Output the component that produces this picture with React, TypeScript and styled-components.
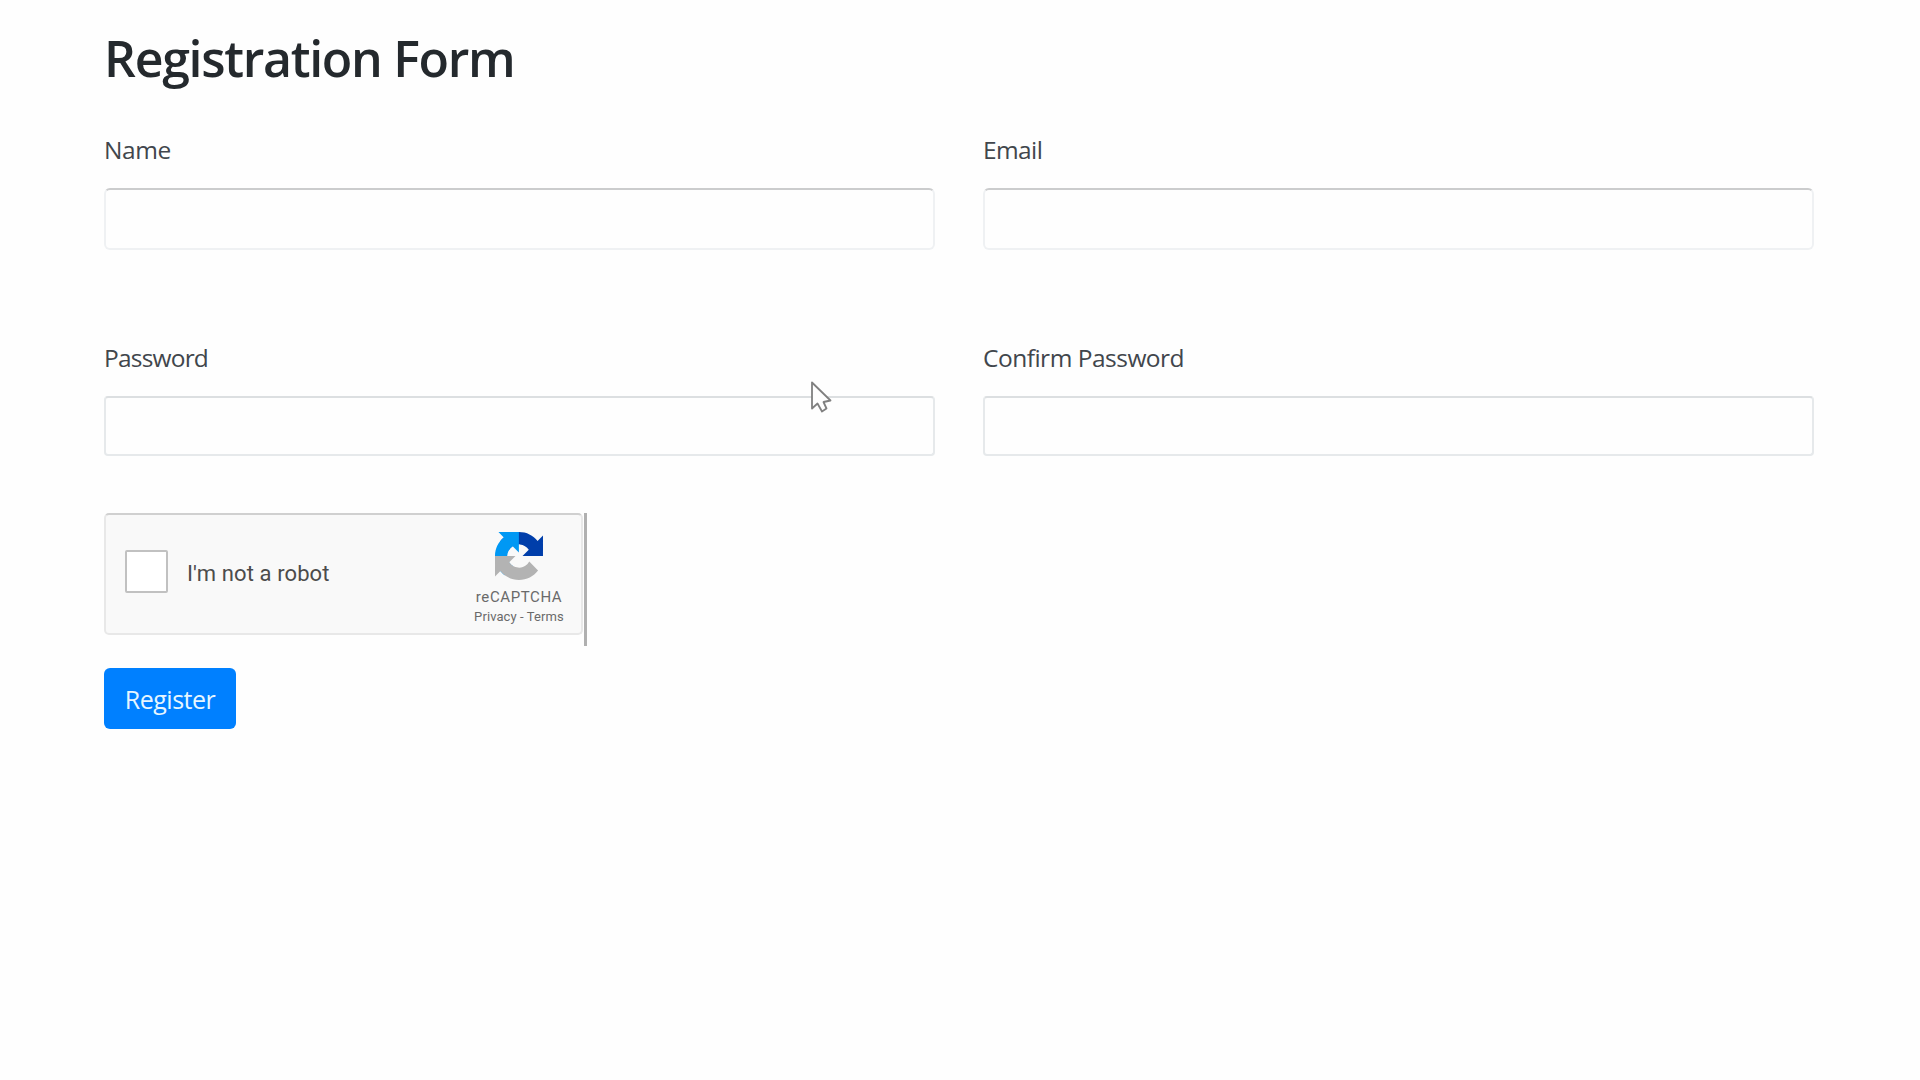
import React from "react";
import styled, { createGlobalStyle } from "styled-components";

const Base = createGlobalStyle`
  * { box-sizing: border-box; }
  html, body { margin: 0; background: #fefefe; }
  body { min-height: 100vh; font-family: "Open Sans", "Noto Sans", sans-serif; color: #212529; }
`;

const Page = styled.main`
  position: relative;
  width: 1920px;
  height: 1080px;
  overflow: hidden;
  padding: 23px 106px 0 104px;
`;

const Title = styled.h1`
  margin: 0;
  height: 104px;
  font-size: 50px;
  line-height: 70px;
  font-weight: 600;
  letter-spacing: -1.3px;
  white-space: nowrap;
  color: #24292d;
`;

const Row = styled.div<{ $gap: number }>`
  display: grid;
  grid-template-columns: 831px 831px;
  column-gap: 48px;
  margin-bottom: ${(p) => p.$gap}px;
`;

const Field = styled.div`
  display: flex;
  flex-direction: column;
`;

const Label = styled.label<{ $track: number }>`
  height: 61px;
  font-size: 24.5px;
  line-height: 46px;
  letter-spacing: ${(p) => p.$track}px;
  white-space: nowrap;
  color: #41464c;
`;

const Input = styled.input<{ $strong?: boolean }>`
  width: 100%;
  height: ${(p) => (p.$strong ? 62 : 60)}px;
  padding: 0 20px;
  border: 2px solid ${(p) => (p.$strong ? "#eff1f3" : "#e6e9eb")};
  border-top-color: ${(p) => (p.$strong ? "#cbcccd" : "#dcdfe1")};
  border-radius: ${(p) => (p.$strong ? 6 : 4)}px;
  background: #fefefe;
  font: inherit;
  outline: none;
`;

const CaptchaFrame = styled.div`
  width: 483px;
  height: 133px;
  border-right: 3px solid #b0b0b0;
  margin-bottom: 22px;
`;

const Captcha = styled.div`
  display: flex;
  align-items: flex-start;
  width: 479px;
  height: 122px;
  padding: 0 16px 0 19px;
  border: 2px solid #e8e8e8;
  border-top-color: #d0d0d0;
  border-radius: 5px;
  background: #f9f9f9;
  font-family: Roboto, sans-serif;
`;

const CheckBox = styled.div`
  width: 43px;
  height: 43px;
  margin-top: 35px;
  border: 2px solid #c1c1c1;
  border-radius: 2px;
  background: #fff;
`;

const CaptchaText = styled.span`
  flex: 1;
  margin: 44px 0 0 19px;
  font-size: 22px;
  line-height: 30px;
  letter-spacing: 0.1px;
  white-space: nowrap;
  color: #4c4c4c;
`;

const Brand = styled.div`
  display: flex;
  flex-direction: column;
  align-items: center;
  width: 92px;
  padding-top: 17px;
  color: #6a6a6a;
  white-space: nowrap;
`;

const BrandName = styled.span`
  margin-top: 6px;
  font-size: 15px;
  line-height: 22px;
  letter-spacing: 0.6px;
`;

const BrandLinks = styled.span`
  font-size: 13px;
  line-height: 18px;
  letter-spacing: 0.1px;
`;

const Submit = styled.button`
  display: block;
  width: 132px;
  height: 61px;
  padding: 0;
  border: 0;
  border-radius: 6px;
  background: #0080ff;
  color: #e6f6ff;
  font-family: inherit;
  font-size: 25px;
  line-height: 62px;
  letter-spacing: -0.5px;
`;

const Pointer = styled.svg`
  position: absolute;
  left: 809px;
  top: 380px;
`;

const Logo = () => (
  <svg width="48" height="48" viewBox="0 0 64 64" aria-hidden="true">
    <path fill="#003eaa" d="M64 31.955l-.033-1.37V4.687l-7.16 7.16C50.948 4.674 42.033.093 32.05.093c-10.4 0-19.622 4.96-25.458 12.64l11.736 11.86a15.55 15.55 0 0 1 4.754-5.334c2.05-1.6 4.952-2.906 8.968-2.906.485 0 .86.057 1.135.163 4.976.393 9.288 3.14 11.828 7.124l-8.307 8.307L64 31.953" />
    <path fill="#0098f4" d="M31.862.094l-1.37.033H4.594l7.16 7.16C4.58 13.147 0 22.06 0 32.046c0 10.4 4.96 19.622 12.64 25.458L24.5 45.768a15.55 15.55 0 0 1-5.334-4.754c-1.6-2.05-2.906-4.952-2.906-8.968 0-.485.057-.86.163-1.135.393-4.976 3.14-9.288 7.124-11.828l8.307 8.307L31.86.095" />
    <path fill="#b3b3b3" d="M.001 32.045l.033 1.37v25.898l7.16-7.16c5.86 7.173 14.774 11.754 24.76 11.754 10.4 0 19.622-4.96 25.458-12.64l-11.736-11.86a15.55 15.55 0 0 1-4.754 5.334c-2.05 1.6-4.952 2.906-8.968 2.906-.485 0-.86-.057-1.135-.163-4.976-.393-9.288-3.14-11.828-7.124l8.307-8.307c-10.522.04-22.4.066-27.295-.005" />
  </svg>
);

interface FieldProps {
  id: string;
  label: string;
  track: number;
  type?: string;
  strong?: boolean;
}

const FormField = ({ id, label, track, type = "text", strong }: FieldProps) => (
  <Field>
    <Label htmlFor={id} $track={track}>{label}</Label>
    <Input id={id} type={type} $strong={strong} />
  </Field>
);

export default function App() {
  return (
    <>
      <Base />
      <Page>
        <Title>Registration Form</Title>
        <Row $gap={85}>
          <FormField id="name" label="Name" track={-0.4} strong />
          <FormField id="email" label="Email" track={-0.6} strong />
        </Row>
        <Row $gap={57}>
          <FormField id="password" label="Password" track={-0.8} type="password" />
          <FormField id="confirm" label="Confirm Password" track={-0.5} type="password" />
        </Row>
        <CaptchaFrame>
          <Captcha>
            <CheckBox role="checkbox" aria-checked="false" />
            <CaptchaText>I'm not a robot</CaptchaText>
            <Brand>
              <Logo />
              <BrandName>reCAPTCHA</BrandName>
              <BrandLinks>Privacy - Terms</BrandLinks>
            </Brand>
          </Captcha>
        </CaptchaFrame>
        <Submit type="button">Register</Submit>
        <Pointer width="26" height="36" viewBox="0 0 26 36" aria-hidden="true">
          <path d="M3 2.5V28.5L8.5 23.5L13 31.5L17.5 28.5L14.5 22L21.5 20.5Z" fill="#fefefe" stroke="#808080" strokeWidth="1.8" strokeLinejoin="round" />
        </Pointer>
      </Page>
    </>
  );
}
